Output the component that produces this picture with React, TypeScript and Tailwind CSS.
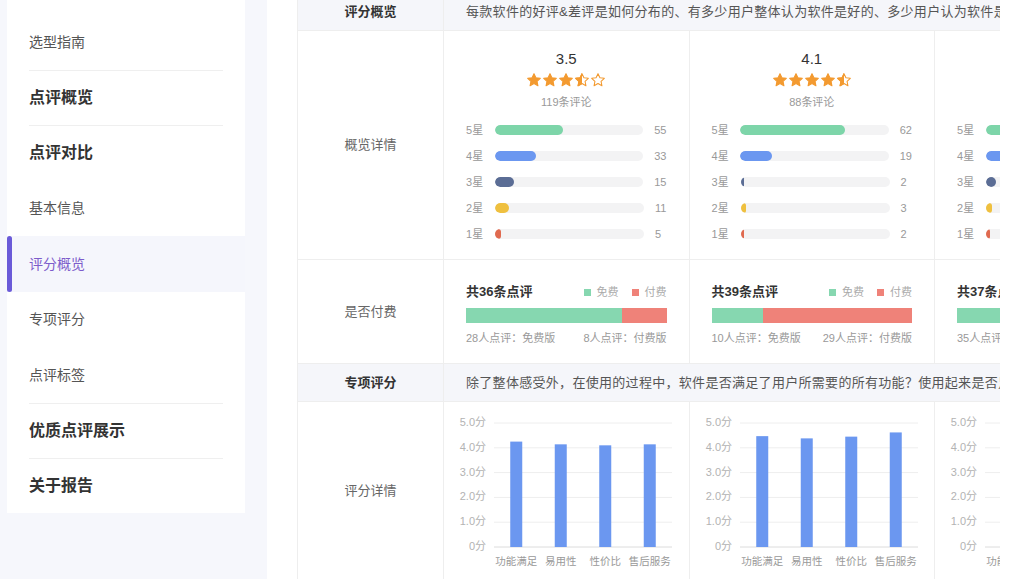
import React from 'react';

// --- datos ---
const NAV = [
  { label: '选型指南', kind: 'sub', divider: false },
  { label: '点评概览', kind: 'main', divider: true },
  { label: '点评对比', kind: 'main', divider: true },
  { label: '基本信息', kind: 'sub', divider: false },
  { label: '评分概览', kind: 'sub', divider: false, active: true },
  { label: '专项评分', kind: 'sub', divider: false },
  { label: '点评标签', kind: 'sub', divider: false },
  { label: '优质点评展示', kind: 'main', divider: true },
  { label: '关于报告', kind: 'main', divider: true },
];

const BAR_COLORS = ['bg-[#7dd5a9]', 'bg-[#6b97f0]', 'bg-[#5b6d95]', 'bg-[#efc03f]', 'bg-[#e06a4f]'];

const OVERVIEW = [
  { rating: '3.5', stars: 3.5, count: 119, dist: [55, 33, 15, 11, 5] },
  { rating: '4.1', stars: 4.5, count: 88, dist: [62, 19, 2, 3, 2] },
  { rating: '4.5', stars: 4.5, count: 77, dist: [45, 22, 5, 3, 2] },
];

const PAYMENT = [
  { total: 36, free: 28, paid: 8 },
  { total: 39, free: 10, paid: 29 },
  { total: 37, free: 35, paid: 2 },
];

const SCORES = [
  [4.25, 4.14, 4.1, 4.14],
  [4.47, 4.38, 4.45, 4.62],
  [4.3, 4.2, 4.1, 4.4],
];

const CATEGORIES = ['功能满足', '易用性', '性价比', '售后服务'];

const FONT = "'Liberation Sans','Noto Sans CJK SC',sans-serif";

const STAR_PATH = 'M12 2.5l2.9 6.1 6.6.8-4.9 4.6 1.3 6.6L12 17.3l-5.9 3.3 1.3-6.6-4.9-4.6 6.6-.8z';

// --- estrellas ---
const Star = ({ type }: { type: 'full' | 'half' | 'empty' }) => (
  <span className="relative block w-[16px] h-[16px]">
    <svg viewBox="0 0 24 24" className="absolute inset-0 w-[16px] h-[16px]">
      <path d={STAR_PATH} fill={type === 'full' ? '#f39a30' : 'none'} stroke="#f39a30" strokeWidth="1.6" strokeLinejoin="round" />
    </svg>
    {type === 'half' && (
      <span className="absolute left-0 top-0 h-[16px] w-[8px] overflow-hidden">
        <svg viewBox="0 0 24 24" className="w-[16px] h-[16px]">
          <path d={STAR_PATH} fill="#f39a30" stroke="#f39a30" strokeWidth="1.6" strokeLinejoin="round" />
        </svg>
      </span>
    )}
  </span>
);

const Stars = ({ value }: { value: number }) => (
  <div className="flex justify-center">
    {[1, 2, 3, 4, 5].map((i) => (
      <Star key={i} type={value >= i ? 'full' : value >= i - 0.5 ? 'half' : 'empty'} />
    ))}
  </div>
);

// --- celda de resumen ---
const OverviewCell = ({ data }: { data: (typeof OVERVIEW)[number] }) => (
  <div className="w-[245.5px] shrink-0 border-r border-[#eeeeee] pt-[18px]">
    <div className="text-center text-[15px] leading-[20px] font-medium text-[#333]">{data.rating}</div>
    <div className="mt-[3px]">
      <Stars value={data.stars} />
    </div>
    <div className="mt-[6px] text-center text-[11px] leading-[16px] text-[#999]">{data.count}条评论</div>
    <div className="mt-[7px] px-[22px]">
      {data.dist.map((n, i) => (
        <div key={i} className="flex items-center h-[26px]">
          <span className="w-[29px] text-[11px] text-[#999]">{5 - i}星</span>
          <div className="w-[149px] h-[10px] rounded-full bg-[#f3f3f4] overflow-hidden">
            <div className={`h-full rounded-full ${BAR_COLORS[i]}`} style={{ width: `${(n / data.count) * 100}%` }} />
          </div>
          <span className="ml-[11px] text-[11px] text-[#999]">{n}</span>
        </div>
      ))}
    </div>
  </div>
);

// --- celda de pago ---
const PaymentCell = ({ data }: { data: (typeof PAYMENT)[number] }) => (
  <div className="w-[245.5px] shrink-0 border-r border-[#eeeeee] px-[22px] pt-[23px]">
    <div className="flex items-center justify-between h-[18px]">
      <span className="text-[13px] font-bold text-[#333]">共{data.total}条点评</span>
      <div className="flex items-center gap-[13px] text-[11px] text-[#aaa]">
        <span className="flex items-center gap-[6px]">
          <span className="w-[7px] h-[7px] bg-[#86d7b0]" />
          免费
        </span>
        <span className="flex items-center gap-[6px]">
          <span className="w-[7px] h-[7px] bg-[#ef8279]" />
          付费
        </span>
      </div>
    </div>
    <div className="mt-[7px] flex h-[15px]">
      <div className="bg-[#86d7b0]" style={{ width: `${(data.free / data.total) * 100}%` }} />
      <div className="flex-1 bg-[#ef8279]" />
    </div>
    <div className="mt-[7px] flex justify-between text-[11px] leading-[16px] text-[#999] whitespace-nowrap">
      <span>{data.free}人点评：免费版</span>
      <span>{data.paid}人点评：付费版</span>
    </div>
  </div>
);

// --- gráfico de barras ---
const ScoreChart = ({ values }: { values: number[] }) => {
  const base = 145;
  const step = 24.8;
  const ticks = [5, 4, 3, 2, 1, 0];
  return (
    <div className="w-[245.5px] shrink-0 border-r border-[#eeeeee]">
      <svg width="245" height="178" fontFamily={FONT}>
        {ticks.map((t) => {
          const y = base - t * step;
          return (
            <g key={t}>
              <line x1="50" x2="228" y1={y} y2={y} stroke={t === 0 ? '#dcdcdc' : '#eeeeee'} strokeWidth="1" />
              <text x="42" y={y} textAnchor="end" dominantBaseline="middle" fontSize="11" fill="#b3b3b3">
                {t === 0 ? '0分' : `${t}.0分`}
              </text>
            </g>
          );
        })}
        {values.map((v, i) => {
          const cx = 72.25 + i * 44.5;
          return (
            <g key={i}>
              <rect x={cx - 6} y={base - v * step} width="12" height={v * step} fill="#6b97f0" />
              <text x={cx} y="160" textAnchor="middle" dominantBaseline="middle" fontSize="10.5" fill="#999">
                {CATEGORIES[i]}
              </text>
            </g>
          );
        })}
      </svg>
    </div>
  );
};

const LabelCell = ({ children, bold }: { children: React.ReactNode; bold?: boolean }) => (
  <div
    className={`w-[146px] shrink-0 border-r border-[#eeeeee] flex items-center justify-center text-[13px] ${
      bold ? 'font-bold text-[#333]' : 'text-[#666]'
    }`}
  >
    {children}
  </div>
);

const HeaderRow = ({ label, text }: { label: string; text: string }) => (
  <div className="flex h-[38px] bg-[#f5f6fa] border-b border-[#eeeeee]">
    <LabelCell bold>{label}</LabelCell>
    <div className="flex-1 min-w-0 overflow-hidden whitespace-nowrap pl-[22px] flex items-center text-[13px] tracking-[0.3px] text-[#555]">
      {text}
    </div>
  </div>
);

// --- barra lateral ---
const Sidebar = () => (
  <div className="w-[238px] h-[513px] bg-white pt-[14px] shrink-0">
    {NAV.map((item) => (
      <div key={item.label} className={`relative h-[55.5px] px-[22px] ${item.active ? 'bg-[#f5f6fc]' : ''}`}>
        {item.active && <span className="absolute left-0 top-0 h-full w-[5px] rounded-[3px] bg-[#6a5ad8]" />}
        <div
          className={`h-full flex items-center border-t ${item.divider ? 'border-[#efefef]' : 'border-transparent'} ${
            item.kind === 'main' ? 'text-[16px] font-bold text-[#333]' : item.active ? 'text-[14px] text-[#7d5ccb]' : 'text-[14px] text-[#555]'
          }`}
        >
          {item.label}
        </div>
      </div>
    ))}
  </div>
);

export default function App() {
  return (
    <div className="h-[579px] w-[1024px] overflow-hidden bg-[#f6f7fc] flex font-['Liberation_Sans','Noto_Sans_CJK_SC',sans-serif]">
      <div className="pl-[7px] pr-[22px]">
        <Sidebar />
      </div>
      <div className="flex-1 bg-white pl-[30px] pr-[24px] h-full">
        <div className="w-[703px] -mt-[7px] overflow-hidden border-l border-[#eeeeee]">
          <HeaderRow label="评分概览" text="每款软件的好评&差评是如何分布的、有多少用户整体认为软件是好的、多少用户认为软件是差评的？" />
          <div className="flex w-max h-[229px] border-b border-[#eeeeee]">
            <LabelCell>概览详情</LabelCell>
            {OVERVIEW.map((d, i) => (
              <OverviewCell key={i} data={d} />
            ))}
          </div>
          <div className="flex w-max h-[104px] border-b border-[#eeeeee]">
            <LabelCell>是否付费</LabelCell>
            {PAYMENT.map((d, i) => (
              <PaymentCell key={i} data={d} />
            ))}
          </div>
          <HeaderRow label="专项评分" text="除了整体感受外，在使用的过程中，软件是否满足了用户所需要的所有功能？使用起来是否足够简单易用？" />
          <div className="flex w-max h-[178px]">
            <LabelCell>评分详情</LabelCell>
            {SCORES.map((v, i) => (
              <ScoreChart key={i} values={v} />
            ))}
          </div>
        </div>
      </div>
    </div>
  );
}
